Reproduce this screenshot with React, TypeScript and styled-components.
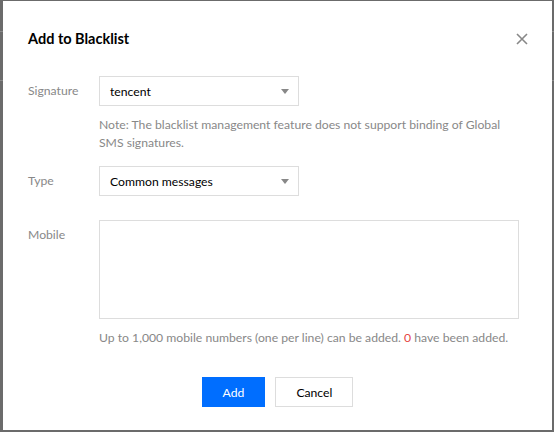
import React from "react";
import styled, { createGlobalStyle } from "styled-components";

const GlobalStyle = createGlobalStyle`
  html, body {
    margin: 0;
    padding: 0;
    height: 432px;
    overflow: hidden;
  }
  body {
    background:
      linear-gradient(to bottom,
        transparent 31px, #8a8a8a 31px, #8a8a8a 32px, transparent 32px,
        transparent 80px, #8a8a8a 80px, #8a8a8a 81px, transparent 81px),
      #6b6b6b;
    font-family: "Segoe UI", Lato, "Noto Sans", sans-serif;
  }
`;

const Dialog = styled.div`
  box-sizing: border-box;
  width: 549px;
  height: 429px;
  margin: 1px 0 0 3px;
  background: #fff;
  display: flex;
  flex-direction: column;
  padding: 28px 0 0 0;
`;

const Header = styled.div`
  display: flex;
  align-items: center;
  justify-content: space-between;
  padding: 0 23px 0 25px;
  height: 20px;
`;

const Title = styled.h3`
  margin: 0;
  font-size: 14.5px;
  line-height: 20px;
  font-weight: 700;
  color: #000;
`;

const CloseButton = styled.button`
  border: 0;
  background: none;
  padding: 0;
  width: 14px;
  height: 14px;
  display: flex;
  align-items: center;
  justify-content: center;
  cursor: pointer;
`;

const Form = styled.div`
  display: flex;
  flex-direction: column;
  padding: 27px 25px 0 25px;
`;

const Row = styled.div<{ $gap: number }>`
  display: flex;
  align-items: flex-start;
  margin-bottom: ${(p) => p.$gap}px;
`;

const Label = styled.div`
  width: 71px;
  flex: none;
  font-size: 12.2px;
  line-height: 30px;
  color: #888;
`;

const Control = styled.div`
  display: flex;
  flex-direction: column;
`;

const Select = styled.div`
  box-sizing: border-box;
  width: 200px;
  height: 30px;
  border: 1px solid #ddd;
  display: flex;
  align-items: center;
  justify-content: space-between;
  padding: 0 9px 0 10px;
  font-size: 12.2px;
  color: #000;
`;

const Arrow = styled.span`
  width: 0;
  height: 0;
  border-left: 4px solid transparent;
  border-right: 4px solid transparent;
  border-top: 5px solid #888;
`;

const Note = styled.div`
  margin-top: 10px;
  width: 420px;
  font-size: 12.2px;
  line-height: 18px;
  color: #888;
`;

const TextArea = styled.div`
  box-sizing: border-box;
  width: 420px;
  height: 99px;
  border: 1px solid #ddd;
`;

const Danger = styled.span`
  color: #e54545;
`;

const Footer = styled.div`
  display: flex;
  justify-content: center;
  gap: 10px;
  margin-top: 30px;
`;

const Button = styled.button<{ $primary?: boolean }>`
  box-sizing: border-box;
  height: 30px;
  min-width: ${(p) => (p.$primary ? 63 : 76)}px;
  padding: 0 20px;
  font-family: inherit;
  font-size: 12.2px;
  border: 1px solid ${(p) => (p.$primary ? "#006eff" : "#ddd")};
  background: ${(p) => (p.$primary ? "#006eff" : "#fff")};
  color: ${(p) => (p.$primary ? "#fff" : "#000")};
  cursor: pointer;
`;

export default function App() {
  return (
    <>
      <GlobalStyle />
      <Dialog>
        <Header>
          <Title>Add to Blacklist</Title>
          <CloseButton aria-label="Close">
            <svg width="12" height="12" viewBox="0 0 12 12">
              <path d="M1 1 L11 11 M11 1 L1 11" stroke="#888" strokeWidth="1.6" fill="none" />
            </svg>
          </CloseButton>
        </Header>
        <Form>
          <Row $gap={14}>
            <Label>Signature</Label>
            <Control>
              <Select>
                <span>tencent</span>
                <Arrow />
              </Select>
              <Note>
                Note: The blacklist management feature does not support binding of Global SMS signatures.
              </Note>
            </Control>
          </Row>
          <Row $gap={24}>
            <Label>Type</Label>
            <Control>
              <Select>
                <span>Common messages</span>
                <Arrow />
              </Select>
            </Control>
          </Row>
          <Row $gap={0}>
            <Label>Mobile</Label>
            <Control>
              <TextArea />
              <Note>
                Up to 1,000 mobile numbers (one per line) can be added. <Danger>0</Danger> have been added.
              </Note>
            </Control>
          </Row>
        </Form>
        <Footer>
          <Button $primary>Add</Button>
          <Button>Cancel</Button>
        </Footer>
      </Dialog>
    </>
  );
}
